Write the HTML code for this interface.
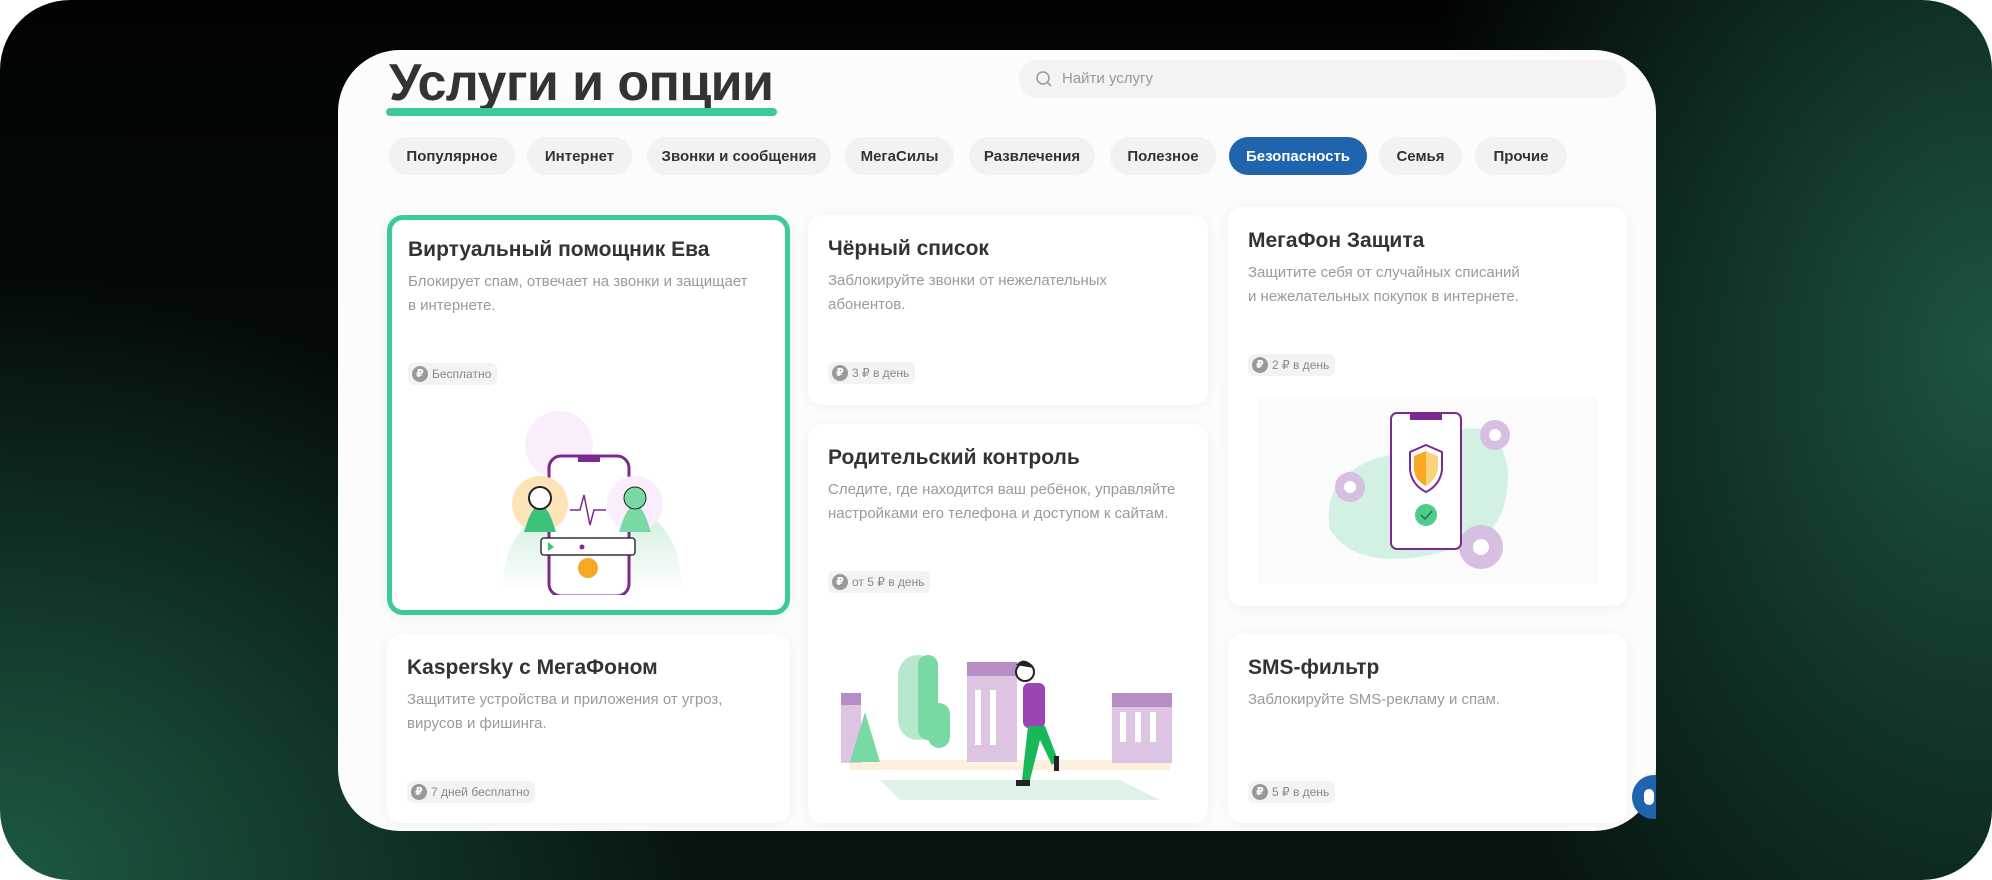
<!DOCTYPE html>
<html><head><meta charset="utf-8"><style>
*{margin:0;padding:0;box-sizing:border-box}
body{width:1992px;height:880px;background:#fff;position:relative;overflow:hidden;font-family:"Liberation Sans","DejaVu Sans",sans-serif}
.bg{position:absolute;left:0;top:0;width:1992px;height:880px;border-radius:70px;background:
radial-gradient(ellipse 700px 600px at 0% 100%,#1d5a42 0%,rgba(29,90,66,0) 100%),
radial-gradient(ellipse 600px 800px at 100% 40%,#1c5540 0%,rgba(28,85,64,0) 100%),
linear-gradient(180deg,#020403,#071410);}
.panel{position:absolute;left:338px;top:50px;width:1318px;height:781px;background:#fcfcfc;border-radius:62px;overflow:hidden}
.h1{position:absolute;left:389px;top:53px;font-size:52px;font-weight:700;color:#333;letter-spacing:-0.6px}
.ul{position:absolute;left:386px;top:108px;width:391px;height:8px;border-radius:4px;background:#3ccb94}
.search{position:absolute;left:1019px;top:60px;width:608px;height:38px;border-radius:19px;background:#f3f3f3}
.search span{position:absolute;left:43px;top:10px;font-size:15px;color:#999}
.tab{position:absolute;top:137px;height:38px;border-radius:19px;background:#f2f2f2;font-size:15px;font-weight:700;color:#333;text-align:center;line-height:40px}
.tab.a{background:#1f64ad;color:#fff}
.card{position:absolute;background:#fff;border-radius:14px;box-shadow:0 2px 14px rgba(0,0,0,0.05)}
.card h3{position:absolute;left:20px;top:22px;font-size:21px;font-weight:700;color:#333}
.card p{position:absolute;left:20px;top:54px;font-size:15px;line-height:24px;color:#9a9a9a;width:380px;white-space:nowrap}
.badge{position:absolute;left:20px;top:147px;height:22px;border-radius:6px;background:#f3f3f3;font-size:12px;color:#888;line-height:22px;padding:0 6px 0 24px}
.badge:before{content:"₽";position:absolute;left:4px;top:3px;width:16px;height:16px;border-radius:8px;background:#999;color:#fff;font-size:11px;line-height:16px;text-align:center;font-weight:700}
</style></head><body>
<div class="bg"></div>
<div class="panel"></div>
<div class="h1">Услуги и опции</div>
<div class="ul"></div>
<div class="search"><svg style="position:absolute;left:16px;top:10px" width="18" height="18" viewBox="0 0 18 18"><circle cx="8" cy="8" r="6" fill="none" stroke="#999" stroke-width="1.5"/><path d="M12.5 12.5L16 16" stroke="#999" stroke-width="1.5"/></svg><span>Найти услугу</span></div>
<div class="tab" style="left:389px;width:126px">Популярное</div>
<div class="tab" style="left:527px;width:105px">Интернет</div>
<div class="tab" style="left:647px;width:184px">Звонки и сообщения</div>
<div class="tab" style="left:845px;width:109px">МегаСилы</div>
<div class="tab" style="left:969px;width:126px">Развлечения</div>
<div class="tab" style="left:1110px;width:106px">Полезное</div>
<div class="tab a" style="left:1229px;width:138px">Безопасность</div>
<div class="tab" style="left:1379px;width:83px">Семья</div>
<div class="tab" style="left:1475px;width:92px">Прочие</div>

<div class="card" style="left:387px;top:215px;width:403px;height:400px;border:5px solid #3ccb94;border-radius:16px">
<h3 style="left:16px;top:18px">Виртуальный помощник Ева</h3>
<p style="left:16px;top:50px">Блокирует спам, отвечает на звонки и защищает<br>в интернете.</p>
<div class="badge" style="left:16px;top:143px">Бесплатно</div>
</div>
<svg style="position:absolute;left:490px;top:410px" width="200" height="185" viewBox="490 410 200 185">
<defs><linearGradient id="g1" x1="0" y1="0" x2="0" y2="1"><stop offset="0" stop-color="#cdeedd"/><stop offset="1" stop-color="#fff"/></linearGradient></defs>
<circle cx="559" cy="445" r="34" fill="#fbeefc"/>
<path d="M502 590 Q505 520 560 508 L630 508 Q680 520 682 590Z" fill="url(#g1)"/>
<rect x="549" y="456" width="80" height="140" rx="12" fill="#fff" stroke="#7b2a8f" stroke-width="3"/>
<rect x="578" y="456" width="22" height="6" fill="#7b2a8f"/>
<circle cx="540" cy="504" r="28" fill="#fde3b8"/>
<circle cx="635" cy="504" r="28" fill="#fbeefc"/>
<path d="M528 520 Q540 490 552 520 L556 532 L524 532Z" fill="#3cc27a"/>
<path d="M623 520 Q635 490 647 520 L651 532 L619 532Z" fill="#79d9a5"/>
<circle cx="540" cy="498" r="11" fill="#fff" stroke="#222" stroke-width="2"/>
<circle cx="635" cy="498" r="11" fill="#79d9a5" stroke="#222" stroke-width="1"/>
<path d="M570 510 L580 510 L584 495 L590 525 L594 510 L606 510" fill="none" stroke="#7b2a8f" stroke-width="1.5"/>
<rect x="541" y="538" width="94" height="17" rx="3" fill="#fff" stroke="#333" stroke-width="1.5"/>
<path d="M548 542 L554 547 L548 551Z" fill="#3cc27a"/>
<circle cx="582" cy="547" r="2.5" fill="#7b2a8f"/>
<circle cx="588" cy="568" r="10" fill="#f9a825"/>
</svg>

<div class="card" style="left:808px;top:215px;width:400px;height:190px"><h3>Чёрный список</h3><p>Заблокируйте звонки от нежелательных<br>абонентов.</p><div class="badge">3 ₽ в день</div></div>

<div class="card" style="left:808px;top:424px;width:400px;height:399px"><h3>Родительский контроль</h3><p>Следите, где находится ваш ребёнок, управляйте<br>настройками его телефона и доступом к сайтам.</p><div class="badge">от 5 ₽ в день</div></div>
<svg style="position:absolute;left:840px;top:650px" width="340" height="155" viewBox="840 650 340 155">
<path d="M880 780 L1120 780 L1160 800 L900 800Z" fill="#dff3e8"/>
<path d="M850 760 L1170 760 L1170 770 L850 770Z" fill="#fdf1dd"/>
<rect x="841" y="693" width="20" height="70" fill="#dcc4e2"/><rect x="841" y="693" width="20" height="12" fill="#b58dc4"/>
<path d="M850 762 L865 712 L880 762Z" fill="#79d9a5"/>
<rect x="898" y="655" width="40" height="85" rx="20" fill="#b5e8cc"/><rect x="918" y="655" width="20" height="85" rx="10" fill="#79d9a5"/>
<rect x="928" y="703" width="22" height="45" rx="11" fill="#79d9a5"/>
<rect x="967" y="662" width="50" height="100" fill="#dcc4e2"/><rect x="967" y="662" width="50" height="14" fill="#b58dc4"/>
<rect x="975" y="690" width="6" height="55" fill="#fff"/><rect x="990" y="690" width="6" height="55" fill="#fff"/>
<rect x="1112" y="693" width="60" height="70" fill="#dcc4e2"/><rect x="1112" y="693" width="60" height="14" fill="#b58dc4"/>
<rect x="1120" y="712" width="6" height="30" fill="#fff"/><rect x="1135" y="712" width="6" height="30" fill="#fff"/><rect x="1150" y="712" width="6" height="30" fill="#fff"/>
<circle cx="1025" cy="672" r="9" fill="#fff" stroke="#222" stroke-width="2"/><path d="M1016 665 Q1025 655 1034 668" fill="#222"/>
<rect x="1023" y="683" width="22" height="45" rx="6" fill="#9b45b3"/>
<path d="M1028 726 L1022 780 L1030 780 L1040 740 L1052 765 L1058 760 L1045 726Z" fill="#18b85a"/>
<rect x="1016" y="780" width="14" height="6" fill="#222"/><rect x="1054" y="756" width="5" height="15" fill="#222"/>
</svg>

<div class="card" style="left:1228px;top:207px;width:399px;height:399px"><h3>МегаФон Защита</h3><p>Защитите себя от случайных списаний<br>и нежелательных покупок в интернете.</p><div class="badge">2 ₽ в день</div></div>
<svg style="position:absolute;left:1257px;top:396px" width="340" height="190" viewBox="1257 396 340 190">
<rect x="1257" y="396" width="340" height="188" fill="#fbfbfb"/>
<path d="M1330 530 Q1320 470 1390 455 Q1440 440 1460 430 Q1500 420 1508 470 Q1510 540 1450 550 Q1360 575 1330 530Z" fill="#d3f1e2"/>
<g fill="#d6bfe0"><circle cx="1495" cy="435" r="15"/><circle cx="1350" cy="487" r="15"/><circle cx="1481" cy="547" r="22"/></g>
<g fill="#fff"><circle cx="1495" cy="435" r="6"/><circle cx="1350" cy="487" r="6"/><circle cx="1481" cy="547" r="8"/></g>
<rect x="1391" y="413" width="70" height="136" rx="6" fill="#fff" stroke="#7b2a8f" stroke-width="2"/>
<rect x="1410" y="413" width="32" height="7" fill="#7b2a8f"/>
<path d="M1426 445 L1442 452 L1442 470 Q1440 485 1426 492 Q1412 485 1410 470 L1410 452Z" fill="#fff" stroke="#7b2a8f" stroke-width="2"/>
<path d="M1426 451 L1426 486 Q1414 480 1414 468 L1414 456Z" fill="#f9a825"/><path d="M1426 451 L1438 456 L1438 468 Q1436 480 1426 486Z" fill="#fdd27a"/>
<circle cx="1426" cy="515" r="11" fill="#4fcc8a"/><path d="M1421 515 L1425 519 L1432 511" fill="none" stroke="#1a7a4a" stroke-width="1.5"/>
</svg>

<div class="card" style="left:387px;top:634px;width:403px;height:189px"><h3>Kaspersky с МегаФоном</h3><p>Защитите устройства и приложения от угроз,<br>вирусов и фишинга.</p><div class="badge">7 дней бесплатно</div></div>
<div class="card" style="left:1228px;top:634px;width:399px;height:189px"><h3>SMS-фильтр</h3><p>Заблокируйте SMS-рекламу и спам.</p><div class="badge">5 ₽ в день</div></div>

<div style="position:absolute;left:1632px;top:775px;width:24px;height:45px;overflow:hidden"><div style="width:44px;height:44px;border-radius:22px;background:#1f64ad;position:relative"><div style="position:absolute;left:12px;top:14px;width:10px;height:16px;border-radius:5px;background:#fff"></div></div></div>
</body></html>
